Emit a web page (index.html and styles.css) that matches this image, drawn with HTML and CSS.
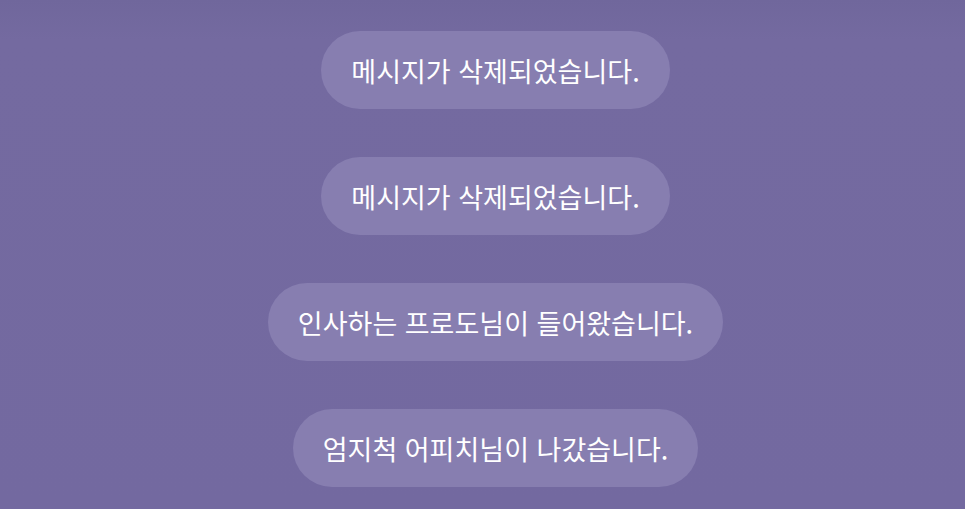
FILE: index.html
```html
<!DOCTYPE html>
<html lang="ko">
<head>
<meta charset="utf-8">
<link rel="stylesheet" href="styles.css">
</head>
<body>
<div class="feed">
  <div class="notice">메시지가 삭제되었습니다.</div>
  <div class="notice">메시지가 삭제되었습니다.</div>
  <div class="notice">인사하는 프로도님이 들어왔습니다.</div>
  <div class="notice">엄지척 어피치님이 나갔습니다.</div>
</div>
</body>
</html>
```
FILE: styles.css
```css
html, body {
  margin: 0;
  padding: 0;
  height: 100%;
}
body {
  background: linear-gradient(#70679c, #746aa0 40px, #7369a0);
  font-family: "Noto Sans CJK KR", "Noto Sans", sans-serif;
  overflow: hidden;
}
.feed {
  display: flex;
  flex-direction: column;
  align-items: center;
  gap: 48px;
  padding-top: 31px;
  padding-left: 26px;
}
.notice {
  height: 78px;
  box-sizing: border-box;
  display: flex;
  align-items: center;
  padding: 0 30px;
  border-radius: 39px;
  background: #877eb0;
  color: #ffffff;
  font-size: 27px;
  font-weight: 400;
  letter-spacing: 0;
  white-space: nowrap;
}
```
